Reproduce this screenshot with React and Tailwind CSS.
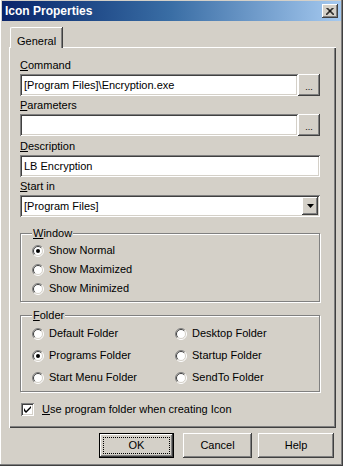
import React from "react";

const raised =
  "shadow-[inset_-1px_-1px_0_#404040,inset_1px_1px_0_#ffffff,inset_-2px_-2px_0_#808080,inset_2px_2px_0_#d4d0c8]";
const sunken =
  "shadow-[inset_1px_1px_0_#808080,inset_-1px_-1px_0_#ffffff,inset_2px_2px_0_#404040,inset_-2px_-2px_0_#d4d0c8]";

const Radio = ({ checked, label }) => (
  <div className="flex items-center gap-[5px] h-[13px]">
    <svg width="12" height="12" viewBox="0 0 12 12" className="shrink-0">
      <circle cx="6" cy="6" r="5" fill="#ffffff" />
      <path d="M9.9 2.1 A5.5 5.5 0 0 0 2.1 9.9" stroke="#808080" fill="none" />
      <path d="M9.9 2.1 A5.5 5.5 0 0 1 2.1 9.9" stroke="#ffffff" fill="none" />
      <path d="M9.2 2.8 A4.5 4.5 0 0 0 2.8 9.2" stroke="#404040" fill="none" />
      <path d="M9.2 2.8 A4.5 4.5 0 0 1 2.8 9.2" stroke="#d4d0c8" fill="none" />
      {checked && <circle cx="6" cy="6" r="2" fill="#000000" />}
    </svg>
    <span>{label}</span>
  </div>
);

const Label = ({ k, rest }) => (
  <div className="h-[13px] leading-[13px]">
    <span className="underline underline-offset-[1px]">{k}</span>
    {rest}
  </div>
);

const Ellipsis = () => (
  <div
    className={`w-[22px] h-[22px] bg-[#d4d0c8] flex items-end justify-center pb-[4px] text-[9px] leading-none ${raised}`}
  >
    ...
  </div>
);

const GroupBox = ({ k, rest, className, children }) => (
  <div
    className={`relative border border-[#808080] shadow-[1px_1px_0_#ffffff,inset_1px_1px_0_#ffffff] ${className}`}
  >
    <div className="absolute -top-[7px] left-[11px] bg-[#d4d0c8] px-[1px] leading-[13px]">
      <span className="underline underline-offset-[1px]">{k}</span>
      {rest}
    </div>
    {children}
  </div>
);

export default function App() {
  return (
    <div
      className="w-[343px] h-[466px] bg-[#d4d0c8] text-[11px] text-black overflow-hidden flex flex-col pt-[1px] px-[2px] shadow-[inset_-1px_-1px_0_#404040,inset_-2px_-2px_0_#808080,inset_1px_0_0_#ffffff]"
      style={{ fontFamily: '"Liberation Sans", Arial, sans-serif' }}
    >
      {/* Title bar */}
      <div className="h-[20px] shrink-0 bg-linear-to-r from-[#0a246a] via-[#3a6ea5] to-[#a6caf0] flex items-center justify-between pl-[3px] pr-[3px]">
        <span className="text-white font-bold text-[12px]">Icon Properties</span>
        <div className={`w-[16px] h-[14px] bg-[#d4d0c8] flex items-center justify-center ${raised}`}>
          <svg width="8" height="7" viewBox="0 0 8 7">
            <path d="M0.5 0 L7.5 7 M7.5 0 L0.5 7 M1.5 0 L8.5 7 M6.5 0 L-0.5 7" stroke="#000000" strokeWidth="1" />
          </svg>
        </div>
      </div>

      {/* Tabs + panel */}
      <div className="pl-[7px] pr-[5px] mt-[6px]">
        <div className="flex">
          <div className="ml-[1px] h-[21px] px-[6px] pt-[5px] bg-[#d4d0c8] border-t border-l border-white shadow-[inset_-1px_0_0_#808080,1px_0_0_#404040] rounded-tl-[2px] relative z-10 -mb-[1px]">
            General
          </div>
        </div>
        <div className="h-[381px] bg-[#d4d0c8] pl-[11px] pr-[16px] pt-[12px] shadow-[inset_1px_1px_0_#ffffff,inset_-1px_-1px_0_#404040,inset_-2px_-2px_0_#808080]">
          <Label k="C" rest="ommand" />
          <div className="flex mt-[2px]">
            <div className={`flex-1 h-[22px] bg-white flex items-center pl-[4px] ${sunken}`}>
              [Program Files]\Encryption.exe
            </div>
            <Ellipsis />
          </div>

          <div className="mt-[3px]">
            <Label k="P" rest="arameters" />
          </div>
          <div className="flex mt-[2px]">
            <div className={`flex-1 h-[22px] bg-white ${sunken}`} />
            <Ellipsis />
          </div>

          <div className="mt-[4px]">
            <Label k="D" rest="escription" />
          </div>
          <div className={`mt-[2px] h-[22px] bg-white flex items-center pl-[4px] ${sunken}`}>
            LB Encryption
          </div>

          <div className="mt-[3px]">
            <Label k="S" rest="tart in" />
          </div>
          <div className={`mt-[2px] h-[22px] bg-white flex items-center justify-between pl-[4px] pr-[2px] ${sunken}`}>
            <span>[Program Files]</span>
            <div className={`w-[16px] h-[18px] bg-[#d4d0c8] flex items-center justify-center ${raised}`}>
              <svg width="7" height="4" viewBox="0 0 7 4">
                <path d="M0 0 H7 L3.5 4 Z" fill="#000000" />
              </svg>
            </div>
          </div>

          <GroupBox k="W" rest="indow" className="mt-[16px] h-[69px] pl-[11px] pt-[10px]">
            <div className="flex flex-col gap-[6px]">
              <Radio checked label="Show Normal" />
              <Radio label="Show Maximized" />
              <Radio label="Show Minimized" />
            </div>
          </GroupBox>

          <GroupBox k="F" rest="older" className="mt-[13px] h-[77px] pl-[11px] pt-[11px]">
            <div className="grid grid-cols-[143px_1fr] gap-y-[9px]">
              <Radio label="Default Folder" />
              <Radio label="Desktop Folder" />
              <Radio checked label="Programs Folder" />
              <Radio label="Startup Folder" />
              <Radio label="Start Menu Folder" />
              <Radio label="SendTo Folder" />
            </div>
          </GroupBox>

          <div className="flex items-center gap-[8px] mt-[9px] pl-[1px]">
            <div className={`w-[13px] h-[13px] bg-white flex items-center justify-center ${sunken}`}>
              <svg width="7" height="7" viewBox="0 0 7 7">
                <path d="M0 2 L0 5 L2 7 L7 2 L7 0 L2 5 Z" fill="#000000" />
              </svg>
            </div>
            <span>
              <span className="underline underline-offset-[1px]">U</span>se program folder when creating Icon
            </span>
          </div>
        </div>
      </div>

      {/* Buttons */}
      <div className="flex mt-[5px] pl-[97px]">
        <div className="w-[75px] h-[25px] border border-black">
          <div className={`w-full h-full bg-[#d4d0c8] p-[3px] ${raised}`}>
            <div className="w-full h-full border border-dotted border-black flex items-center justify-center">
              OK
            </div>
          </div>
        </div>
        <div className={`ml-[9px] w-[69px] h-[25px] bg-[#d4d0c8] flex items-center justify-center ${raised}`}>
          Cancel
        </div>
        <div className={`ml-[6px] w-[76px] h-[25px] bg-[#d4d0c8] flex items-center justify-center ${raised}`}>
          Help
        </div>
      </div>
    </div>
  );
}
